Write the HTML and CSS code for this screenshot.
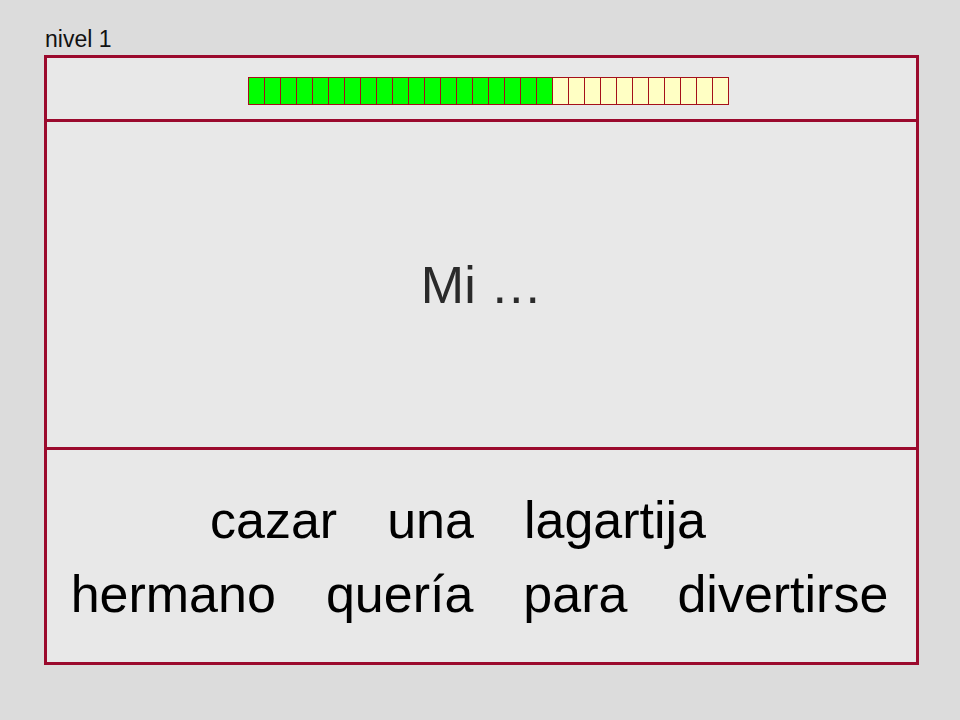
FILE: index.html
```html
<!DOCTYPE html>
<html>
<head>
    <title>nivel 1</title>
    <link rel="stylesheet" href="styles.css">
</head>
<body>
    <div class="page">
        <div class="level">nivel 1</div>
        <div class="board">
            <!-- progreso -->
            <div class="progress-row">
                <div class="progress">
                    <span class="cell done"></span><span class="cell done"></span><span class="cell done"></span><span class="cell done"></span><span class="cell done"></span>
                    <span class="cell done"></span><span class="cell done"></span><span class="cell done"></span><span class="cell done"></span><span class="cell done"></span>
                    <span class="cell done"></span><span class="cell done"></span><span class="cell done"></span><span class="cell done"></span><span class="cell done"></span>
                    <span class="cell done"></span><span class="cell done"></span><span class="cell done"></span><span class="cell done"></span>
                    <span class="cell"></span><span class="cell"></span><span class="cell"></span><span class="cell"></span><span class="cell"></span>
                    <span class="cell"></span><span class="cell"></span><span class="cell"></span><span class="cell"></span><span class="cell"></span><span class="cell"></span>
                </div>
            </div>
            <!-- frase -->
            <div class="sentence">Mi …</div>
            <!-- palabras -->
            <div class="words">
                <div class="word-row row-1">
                    <span class="word">cazar</span>
                    <span class="word">una</span>
                    <span class="word">lagartija</span>
                </div>
                <div class="word-row row-2">
                    <span class="word">hermano</span>
                    <span class="word">quería</span>
                    <span class="word">para</span>
                    <span class="word">divertirse</span>
                </div>
            </div>
        </div>
    </div>
</body>
</html>
```
FILE: styles.css
```css
body {
    margin: 0;
    background-color: #dcdcdc;
    font-family: "Liberation Sans", Arial, sans-serif;
}
.page {
    padding: 27px 0 0 44px;
}
.level {
    font-size: 23px;
    line-height: 25px;
    padding-left: 1px;
    margin-bottom: 3px;
    color: #111;
}
.board {
    width: 875px;
    height: 610px;
    box-sizing: border-box;
    border: 3px solid #9b0a2d;
    background-color: #e8e8e8;
    display: flex;
    flex-direction: column;
}
.progress-row {
    height: 42px;
    border-bottom: 3px solid #9b0a2d;
    padding: 19px 0 0 14px;
    display: flex;
    justify-content: center;
    align-items: flex-start;
}
.progress {
    display: flex;
    border-left: 1px solid #a5101a;
}
.cell {
    width: 15px;
    height: 26px;
    border: 1px solid #a5101a;
    border-left: none;
    background-color: #ffffc4;
}
.cell.done {
    background-color: #00ff00;
}
.sentence {
    height: 325px;
    border-bottom: 3px solid #9b0a2d;
    display: flex;
    align-items: center;
    justify-content: center;
    font-size: 52px;
    color: #2a2a2a;
}
.words {
    flex: 1;
    display: flex;
    flex-direction: column;
    align-items: center;
    justify-content: center;
    padding-top: 2px;
}
.word-row {
    display: flex;
    gap: 50px;
    font-size: 52px;
    line-height: 74px;
    color: #000;
}
.row-1 {
    margin-right: 47px;
}
.row-2 {
    margin-right: 4px;
}
```
